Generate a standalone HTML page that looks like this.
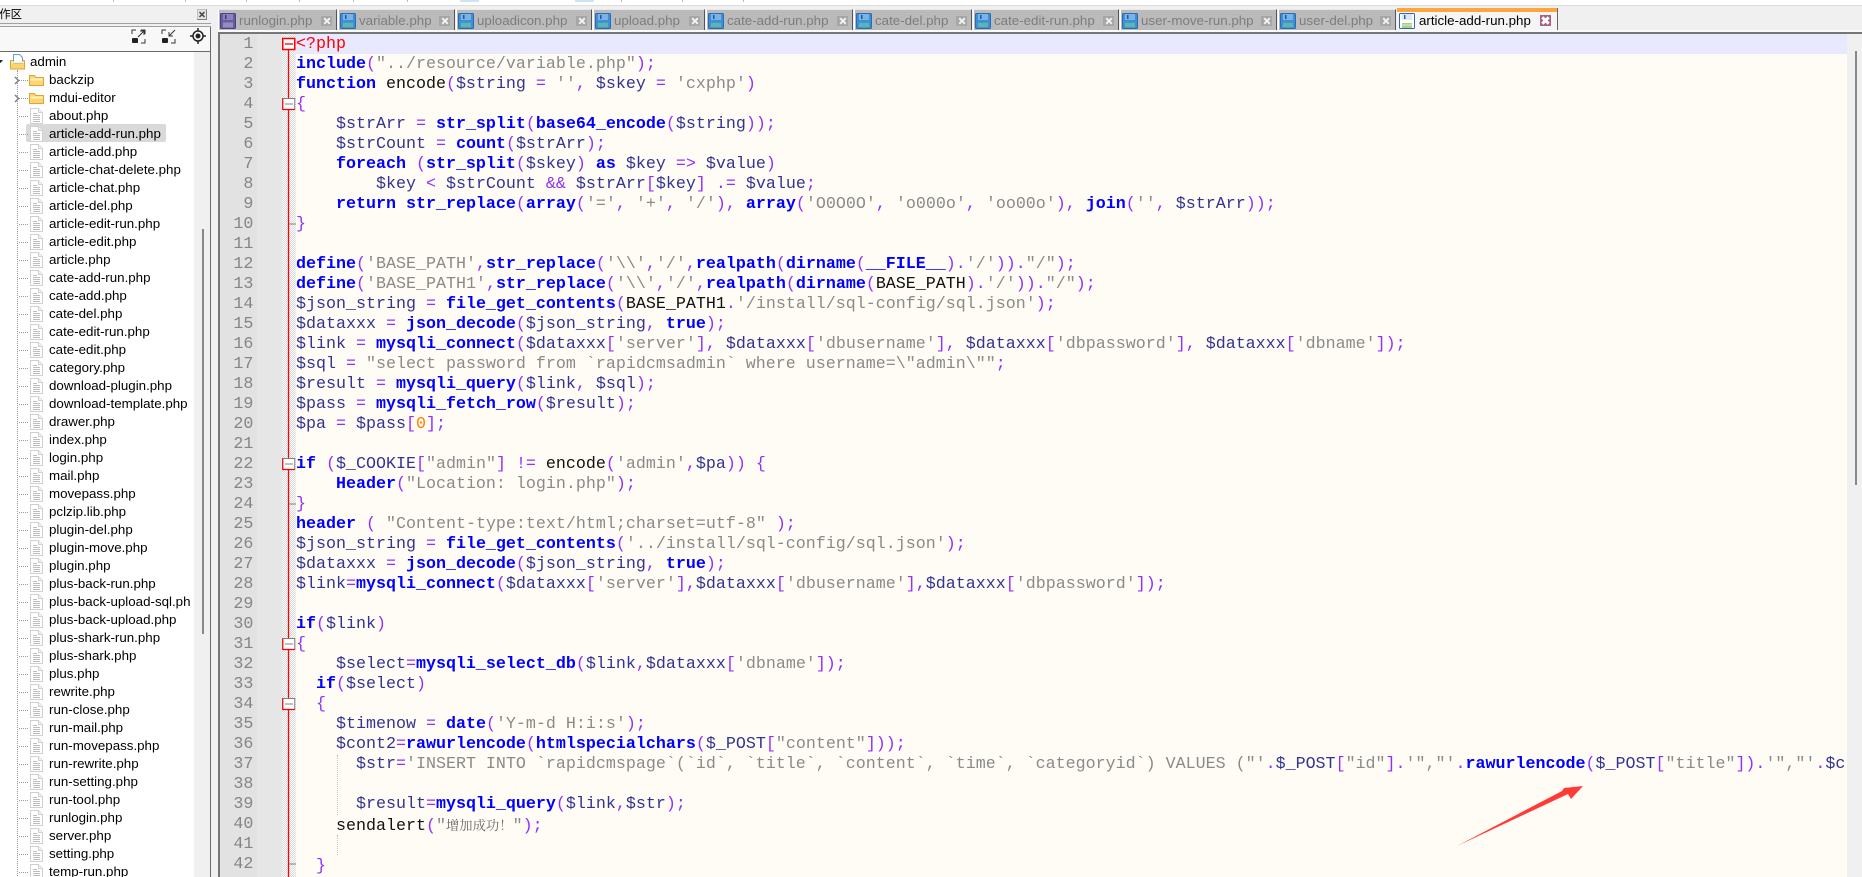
<!DOCTYPE html>
<html lang="zh">
<head>
<meta charset="utf-8">
<title>article-add-run.php</title>
<style>
html,body{margin:0;padding:0;width:1862px;height:877px;overflow:hidden;background:#f0f0f0;font-family:"Liberation Sans","Noto Sans CJK SC",sans-serif;}
*{box-sizing:border-box;}
.a{position:absolute;}
#top{left:0;top:0;width:1862px;height:5px;background:#fff;}
#topl{left:0;top:5px;width:1862px;height:1px;background:#dcdcdc;}
.tick{position:absolute;top:0;width:1px;height:2px;background:#bbb;}
.hl{position:absolute;top:0;height:2px;background:#cfe3f7;}
/* sidebar */
#ttl{right:1840px;top:8px;font-size:11.4px;line-height:15px;color:#000;white-space:nowrap;}
#l1{left:0;top:23px;width:211px;height:1px;background:#a0a0a0;}
#l2{left:0;top:26px;width:211px;height:1px;background:#a0a0a0;}
#bar{left:0;top:27px;width:210px;height:24px;background:#f8f8f8;}
#l3{left:0;top:51px;width:211px;height:1px;background:#6a6a6a;}
#vb{left:210px;top:27px;width:1px;height:850px;background:#6a6a6a;}
#tree{left:0;top:52px;width:194px;height:825px;background:#fff;overflow:hidden;}
#gut{left:194px;top:52px;width:16px;height:825px;background:#f0f0f0;}
#thumb{left:202px;top:229px;width:2px;height:405px;background:#888;}
#sel{left:26px;top:72px;width:140px;height:18px;background:#d9d9d9;border-radius:2px;}
#vdot{left:17px;top:18px;width:0;height:810px;border-left:1px dotted #999;}
#rows{left:0;top:1px;width:194px;}
.r{position:relative;height:18px;font-size:13.33px;line-height:18px;padding-left:49px;white-space:nowrap;color:#000;}
.r:before{content:"";position:absolute;left:19px;top:9px;width:9px;border-top:1px dotted #999;}
.r.root{padding-left:30px;}
.r.root:before{display:none;}
.r svg{position:absolute;left:29px;top:1px;}
.r.root svg{left:10px;}
.chev{position:absolute;left:14px;top:5px;}
/* tabs */
.t{position:absolute;top:9px;height:21px;background:#bababa;border-left:1px solid #fff;border-right:1px solid #555;border-top:1px solid #e8e8e8;font-size:13.33px;line-height:21px;color:#7d7d7d;white-space:nowrap;}
.t svg{position:absolute;left:1px;top:3px;}
.t span{position:absolute;left:20px;top:0;}
.t i{position:absolute;right:4px;top:6px;width:11px;height:10px;background:#a6a6a6;}
.t i:before,.t i:after{content:"";position:absolute;left:1.5px;top:4px;width:8px;height:2px;background:#f2f2f2;transform:rotate(45deg);}
.t i:after{transform:rotate(-45deg);}
#act{position:absolute;left:1397px;top:8px;width:161px;height:24px;background:#f5f5f5;border-right:1px solid #666;font-size:13.33px;line-height:26px;color:#000;white-space:nowrap;}
#act b{position:absolute;left:0;top:0;width:160px;height:4px;background:#ffa53c;}
#act svg{position:absolute;left:2px;top:5px;}
#act span{position:absolute;left:22px;top:0;}
#act i{position:absolute;left:143px;top:7px;width:11px;height:11px;background:#a8647e;}
#act i:before,#act i:after{content:"";position:absolute;left:1px;top:4px;width:9px;height:3px;background:#fff;transform:rotate(45deg);}
#act i:after{transform:rotate(-45deg);}
#wl{left:218px;top:30px;width:1644px;height:2px;background:#fafafa;}
#dl{left:218px;top:32px;width:1644px;height:2px;background:#777;}
/* editor */
#el{left:218px;top:32px;width:2px;height:845px;background:#777;}
#num1{left:220px;top:34px;width:37px;height:843px;background:#e2e2e2;}
#num2{left:257px;top:34px;width:25px;height:843px;background:#e6e6e6;}
#nums{left:220px;top:35px;width:33.4px;margin:0;text-align:right;font:16.67px/20px "Liberation Mono",monospace;color:#858585;height:842px;overflow:hidden;}
#fold{left:282px;top:34px;width:14px;height:843px;background-color:#fff;background-image:conic-gradient(#d8d8d8 25%,#fff 0 50%,#d8d8d8 0 75%,#fff 0);background-size:2px 2px;}
#bg{left:296px;top:34px;width:1551px;height:843px;background:#fffcf5;}
#cur{left:296px;top:34px;width:1551px;height:20px;background:#e8e8ff;}
#code{left:296px;top:35px;width:1551px;height:842px;margin:0;overflow:hidden;white-space:pre;font:16.67px/20px "Liberation Mono",monospace;color:#111;}
#code .k{color:#0000ff;font-weight:bold;}
#code .v{color:#333392;}
#code .o{color:#9030ff;}
#code .s{color:#8a8a8a;}
#code .n{color:#ff8000;}
#code .r0{color:#ff0000;}
#code .c{font:13.33px/20px "Noto Serif CJK SC","Noto Sans CJK SC",sans-serif;color:#6a6a6a;}
.g{position:absolute;left:337px;width:0;border-left:1px dotted #c4c4c4;}
#sg{left:1848px;top:34px;width:14px;height:843px;background:#f0f0f0;}
#st{left:1855px;top:51px;width:2px;height:434px;background:#888;}
</style>
</head>
<body>
<svg width="0" height="0" style="position:absolute">
<defs>
<symbol id="fb" viewBox="0 0 16 16"><rect x=".5" y=".5" width="15" height="15" rx="1" fill="#3c8fd8" stroke="#2a6cb0"/><rect x="3" y="1" width="10" height="6" fill="#7ab4e6"/><rect x="5" y="2" width="1.5" height="4" fill="#1f5a94"/><rect x="3" y="9" width="10" height="6" fill="#3f9fb0"/><path d="M3 11h10M3 13h10" stroke="#7fc6c6"/></symbol>
<symbol id="fp" viewBox="0 0 16 16"><rect x=".5" y=".5" width="15" height="15" rx="1" fill="#6a5aa0" stroke="#4a4090"/><rect x="3" y="1" width="10" height="6" fill="#8f82bc"/><rect x="5" y="2" width="1.5" height="4" fill="#3f3580"/><rect x="3" y="9" width="10" height="6" fill="#7f75b0"/><path d="M3 11h10M3 13h10" stroke="#a9a2cc"/></symbol>
<symbol id="fa" viewBox="0 0 16 16"><rect x=".5" y=".5" width="15" height="15" rx="1" fill="#fff" stroke="#2f66b5"/><rect x="3" y="1" width="10" height="6" fill="#dbe7f6"/><rect x="5" y="2" width="1.5" height="4" fill="#2f66b5"/><rect x="3" y="10" width="10" height="5" fill="#a8d08a"/><path d="M3 12h10" stroke="#d8ecc8"/></symbol>
<symbol id="file" viewBox="0 0 15 16"><path d="M1.5 .5h8l4 4v11h-12z" fill="#fff" stroke="#d0d0d0"/><path d="M9.5 .5v4h4" fill="#f2f2f2" stroke="#d0d0d0"/><path d="M4 5.500h4M4 7.500h7M4 9.500h7M4 11.500h7M4 13.500h7" stroke="#bdbdbd"/></symbol>
<symbol id="fold1" viewBox="0 0 15 16"><path d="M.5 3.500h5l1.500 2h7.500v8h-14z" fill="#fbd66e" stroke="#e3a335"/><path d="M1.500 6.500h12v2h-12z" fill="#fff2b8"/></symbol>
<symbol id="froot" viewBox="0 0 15 16"><path d="M.5 6.500h14v8.500h-14z" fill="#fbd66e" stroke="#e3a335"/><path d="M3.500 .5h6l3 3v6h-9z" fill="#fff" stroke="#6a9ad0"/><path d="M1.500 8.500h12" stroke="#fff2b8" stroke-width="2"/></symbol>
</defs>
</svg>

<div class="a" id="top">
<div class="tick" style="left:113px"></div><div class="tick" style="left:185px"></div><div class="tick" style="left:246px"></div><div class="tick" style="left:299px"></div><div class="tick" style="left:353px"></div><div class="tick" style="left:407px"></div><div class="hl" style="left:460px;width:19px"></div><div class="hl" style="left:575px;width:19px"></div><div class="tick" style="left:621px"></div><div class="tick" style="left:682px"></div><div class="tick" style="left:743px"></div>
</div>
<div class="a" id="topl"></div>

<!-- sidebar -->
<div class="a" id="ttl">文件夹工作区</div>
<div class="a" style="left:197px;top:9px;width:10px;height:11px;background:#e2e2e2;border:1px solid #c0c0c0;border-right-color:#808080;border-bottom-color:#808080"><svg width="8" height="9" style="position:absolute;left:0;top:0"><path d="M1.500 2l5 5M6.500 2l-5 5" stroke="#444" stroke-width="1.500"/></svg></div>
<div class="a" id="l1"></div>
<div class="a" id="l2"></div>
<div class="a" id="bar">
<svg class="a" style="left:131px;top:2px" width="15" height="15" viewBox="0 0 15 15" fill="none"><path d="M1 5V1h4M10 1h4v4M14 10v4h-4" stroke="#333"/><path d="M7 8l6-6M9 2h4v4" stroke="#333"/><rect x="1" y="9" width="6" height="5" rx="1" fill="#222"/></svg>
<svg class="a" style="left:161px;top:2px" width="15" height="15" viewBox="0 0 15 15" fill="none"><path d="M1 5V1h4M14 10v4h-4" stroke="#333"/><path d="M14 1L8 7M8 3v4h4" stroke="#333"/><rect x="1" y="9" width="6" height="5" rx="1" fill="#222"/></svg>
<svg class="a" style="left:190px;top:1px" width="16" height="16" viewBox="0 0 16 16" fill="none"><circle cx="8" cy="8" r="5" stroke="#222" stroke-width="1.500"/><circle cx="8" cy="8" r="2.500" fill="#222"/><path d="M8 0v3M8 13v3M0 8h3M13 8h3" stroke="#222" stroke-width="1.500"/></svg>
</div>
<div class="a" id="l3"></div>
<div class="a" id="vb"></div>
<div class="a" id="gut"></div>
<div class="a" id="thumb"></div>
<div class="a" id="tree">
<div class="a" id="sel"></div>
<div class="a" id="vdot"></div>
<svg class="a" style="left:0;top:7px" width="4" height="6"><path d="M-2 1h5l-2.500 3z" fill="#222"/></svg>
<div class="a" id="rows">
<div class="r root"><svg width="15" height="16"><use href="#froot"/></svg>admin</div>
<div class="r"><svg class="chev" style="left:14px;top:5px" width="6" height="9" viewBox="0 0 6 9"><path d="M1 1l3.500 3.500L1 8" fill="none" stroke="#808080" stroke-width="1.500"/></svg><svg width="15" height="16"><use href="#fold1"/></svg>backzip</div>
<div class="r"><svg class="chev" style="left:14px;top:5px" width="6" height="9" viewBox="0 0 6 9"><path d="M1 1l3.500 3.500L1 8" fill="none" stroke="#808080" stroke-width="1.500"/></svg><svg width="15" height="16"><use href="#fold1"/></svg>mdui-editor</div>
<div class="r"><svg width="15" height="16"><use href="#file"/></svg>about.php</div>
<div class="r"><svg width="15" height="16"><use href="#file"/></svg>article-add-run.php</div>
<div class="r"><svg width="15" height="16"><use href="#file"/></svg>article-add.php</div>
<div class="r"><svg width="15" height="16"><use href="#file"/></svg>article-chat-delete.php</div>
<div class="r"><svg width="15" height="16"><use href="#file"/></svg>article-chat.php</div>
<div class="r"><svg width="15" height="16"><use href="#file"/></svg>article-del.php</div>
<div class="r"><svg width="15" height="16"><use href="#file"/></svg>article-edit-run.php</div>
<div class="r"><svg width="15" height="16"><use href="#file"/></svg>article-edit.php</div>
<div class="r"><svg width="15" height="16"><use href="#file"/></svg>article.php</div>
<div class="r"><svg width="15" height="16"><use href="#file"/></svg>cate-add-run.php</div>
<div class="r"><svg width="15" height="16"><use href="#file"/></svg>cate-add.php</div>
<div class="r"><svg width="15" height="16"><use href="#file"/></svg>cate-del.php</div>
<div class="r"><svg width="15" height="16"><use href="#file"/></svg>cate-edit-run.php</div>
<div class="r"><svg width="15" height="16"><use href="#file"/></svg>cate-edit.php</div>
<div class="r"><svg width="15" height="16"><use href="#file"/></svg>category.php</div>
<div class="r"><svg width="15" height="16"><use href="#file"/></svg>download-plugin.php</div>
<div class="r"><svg width="15" height="16"><use href="#file"/></svg>download-template.php</div>
<div class="r"><svg width="15" height="16"><use href="#file"/></svg>drawer.php</div>
<div class="r"><svg width="15" height="16"><use href="#file"/></svg>index.php</div>
<div class="r"><svg width="15" height="16"><use href="#file"/></svg>login.php</div>
<div class="r"><svg width="15" height="16"><use href="#file"/></svg>mail.php</div>
<div class="r"><svg width="15" height="16"><use href="#file"/></svg>movepass.php</div>
<div class="r"><svg width="15" height="16"><use href="#file"/></svg>pclzip.lib.php</div>
<div class="r"><svg width="15" height="16"><use href="#file"/></svg>plugin-del.php</div>
<div class="r"><svg width="15" height="16"><use href="#file"/></svg>plugin-move.php</div>
<div class="r"><svg width="15" height="16"><use href="#file"/></svg>plugin.php</div>
<div class="r"><svg width="15" height="16"><use href="#file"/></svg>plus-back-run.php</div>
<div class="r"><svg width="15" height="16"><use href="#file"/></svg>plus-back-upload-sql.ph</div>
<div class="r"><svg width="15" height="16"><use href="#file"/></svg>plus-back-upload.php</div>
<div class="r"><svg width="15" height="16"><use href="#file"/></svg>plus-shark-run.php</div>
<div class="r"><svg width="15" height="16"><use href="#file"/></svg>plus-shark.php</div>
<div class="r"><svg width="15" height="16"><use href="#file"/></svg>plus.php</div>
<div class="r"><svg width="15" height="16"><use href="#file"/></svg>rewrite.php</div>
<div class="r"><svg width="15" height="16"><use href="#file"/></svg>run-close.php</div>
<div class="r"><svg width="15" height="16"><use href="#file"/></svg>run-mail.php</div>
<div class="r"><svg width="15" height="16"><use href="#file"/></svg>run-movepass.php</div>
<div class="r"><svg width="15" height="16"><use href="#file"/></svg>run-rewrite.php</div>
<div class="r"><svg width="15" height="16"><use href="#file"/></svg>run-setting.php</div>
<div class="r"><svg width="15" height="16"><use href="#file"/></svg>run-tool.php</div>
<div class="r"><svg width="15" height="16"><use href="#file"/></svg>runlogin.php</div>
<div class="r"><svg width="15" height="16"><use href="#file"/></svg>server.php</div>
<div class="r"><svg width="15" height="16"><use href="#file"/></svg>setting.php</div>
<div class="r"><svg width="15" height="16"><use href="#file"/></svg>temp-run.php</div>
</div>
</div>

<!-- tabs -->
<div class="t" style="left:218px;width:119px"><svg width="16" height="16"><use href="#fp"/></svg><span>runlogin.php</span><i></i></div>
<div class="t" style="left:338px;width:117px"><svg width="16" height="16"><use href="#fb"/></svg><span>variable.php</span><i></i></div>
<div class="t" style="left:456px;width:136px"><svg width="16" height="16"><use href="#fb"/></svg><span>uploadicon.php</span><i></i></div>
<div class="t" style="left:593px;width:112px"><svg width="16" height="16"><use href="#fb"/></svg><span>upload.php</span><i></i></div>
<div class="t" style="left:706px;width:147px"><svg width="16" height="16"><use href="#fb"/></svg><span>cate-add-run.php</span><i></i></div>
<div class="t" style="left:854px;width:118px"><svg width="16" height="16"><use href="#fb"/></svg><span>cate-del.php</span><i></i></div>
<div class="t" style="left:973px;width:146px"><svg width="16" height="16"><use href="#fb"/></svg><span>cate-edit-run.php</span><i></i></div>
<div class="t" style="left:1120px;width:157px"><svg width="16" height="16"><use href="#fb"/></svg><span>user-move-run.php</span><i></i></div>
<div class="t" style="left:1278px;width:118px"><svg width="16" height="16"><use href="#fb"/></svg><span>user-del.php</span><i></i></div>
<div id="act"><b></b><svg width="16" height="16"><use href="#fa"/></svg><span>article-add-run.php</span><i></i></div>
<div class="a" id="wl"></div>
<div class="a" id="dl"></div>

<!-- editor -->
<div class="a" id="el"></div>
<div class="a" id="num1"></div>
<div class="a" id="num2"></div>
<pre class="a" id="nums">1
2
3
4
5
6
7
8
9
10
11
12
13
14
15
16
17
18
19
20
21
22
23
24
25
26
27
28
29
30
31
32
33
34
35
36
37
38
39
40
41
42</pre>
<div class="a" id="fold"></div>
<svg class="a" style="left:282px;top:34px" width="14" height="843" viewBox="0 0 14 843">
<path d="M6.500 15V843" stroke="#ff0000" stroke-width="1.300" fill="none"/>
<rect x=".75" y="4.500" width="12" height="11" fill="#fff" stroke="#ff0000" stroke-width="1.500"/><path d="M3 10h8" stroke="#ff0000" stroke-width="1.300"/>
<g id="b">
<rect x=".75" y="64.500" width="12" height="11" fill="#fff" stroke="#808080"/><path d="M3 70h8" stroke="#808080"/><path d="M.75 64.500v11h12" fill="none" stroke="#ff0000" stroke-width="1.200"/>
<rect x=".75" y="424.500" width="12" height="11" fill="#fff" stroke="#808080"/><path d="M3 430h8" stroke="#808080"/><path d="M.75 424.500v11h12" fill="none" stroke="#ff0000" stroke-width="1.200"/>
<rect x=".75" y="604.500" width="12" height="11" fill="#fff" stroke="#808080"/><path d="M3 610h8" stroke="#808080"/><path d="M.75 604.500v11h12" fill="none" stroke="#ff0000" stroke-width="1.200"/>
<rect x=".75" y="664.500" width="12" height="11" fill="#fff" stroke="#808080"/><path d="M3 670h8" stroke="#808080"/><path d="M.75 664.500v11h12" fill="none" stroke="#ff0000" stroke-width="1.200"/>
</g>
<path d="M7 190h7M7 470h7M7 830h7" stroke="#808080"/>
</svg>
<div class="a" id="bg"></div>
<div class="a" id="cur"></div>
<div class="g" style="top:755px;height:60px"></div>
<div class="g" style="top:835px;height:20px"></div>
<pre class="a" id="code"><span class="r0">&lt;?php</span>
<span class="k">include</span><span class="o">(</span><span class="s">"../resource/variable.php"</span><span class="o">);</span>
<span class="k">function</span> encode<span class="o">(</span><span class="v">$string</span> <span class="o">=</span> <span class="s">''</span><span class="o">,</span> <span class="v">$skey</span> <span class="o">=</span> <span class="s">'cxphp'</span><span class="o">)</span>
<span class="o">{</span>
    <span class="v">$strArr</span> <span class="o">=</span> <span class="k">str_split</span><span class="o">(</span><span class="k">base64_encode</span><span class="o">(</span><span class="v">$string</span><span class="o">));</span>
    <span class="v">$strCount</span> <span class="o">=</span> <span class="k">count</span><span class="o">(</span><span class="v">$strArr</span><span class="o">);</span>
    <span class="k">foreach</span> <span class="o">(</span><span class="k">str_split</span><span class="o">(</span><span class="v">$skey</span><span class="o">)</span> <span class="k">as</span> <span class="v">$key</span> <span class="o">=&gt;</span> <span class="v">$value</span><span class="o">)</span>
        <span class="v">$key</span> <span class="o">&lt;</span> <span class="v">$strCount</span> <span class="o">&amp;&amp;</span> <span class="v">$strArr</span><span class="o">[</span><span class="v">$key</span><span class="o">]</span> <span class="o">.=</span> <span class="v">$value</span><span class="o">;</span>
    <span class="k">return</span> <span class="k">str_replace</span><span class="o">(</span><span class="k">array</span><span class="o">(</span><span class="s">'='</span><span class="o">,</span> <span class="s">'+'</span><span class="o">,</span> <span class="s">'/'</span><span class="o">),</span> <span class="k">array</span><span class="o">(</span><span class="s">'O0O0O'</span><span class="o">,</span> <span class="s">'o000o'</span><span class="o">,</span> <span class="s">'oo00o'</span><span class="o">),</span> <span class="k">join</span><span class="o">(</span><span class="s">''</span><span class="o">,</span> <span class="v">$strArr</span><span class="o">));</span>
<span class="o">}</span>

<span class="k">define</span><span class="o">(</span><span class="s">'BASE_PATH'</span><span class="o">,</span><span class="k">str_replace</span><span class="o">(</span><span class="s">'\\'</span><span class="o">,</span><span class="s">'/'</span><span class="o">,</span><span class="k">realpath</span><span class="o">(</span><span class="k">dirname</span><span class="o">(</span><span class="k">__FILE__</span><span class="o">).</span><span class="s">'/'</span><span class="o">)).</span><span class="s">"/"</span><span class="o">);</span>
<span class="k">define</span><span class="o">(</span><span class="s">'BASE_PATH1'</span><span class="o">,</span><span class="k">str_replace</span><span class="o">(</span><span class="s">'\\'</span><span class="o">,</span><span class="s">'/'</span><span class="o">,</span><span class="k">realpath</span><span class="o">(</span><span class="k">dirname</span><span class="o">(</span>BASE_PATH<span class="o">).</span><span class="s">'/'</span><span class="o">)).</span><span class="s">"/"</span><span class="o">);</span>
<span class="v">$json_string</span> <span class="o">=</span> <span class="k">file_get_contents</span><span class="o">(</span>BASE_PATH1<span class="o">.</span><span class="s">'/install/sql-config/sql.json'</span><span class="o">);</span>
<span class="v">$dataxxx</span> <span class="o">=</span> <span class="k">json_decode</span><span class="o">(</span><span class="v">$json_string</span><span class="o">,</span> <span class="k">true</span><span class="o">);</span>
<span class="v">$link</span> <span class="o">=</span> <span class="k">mysqli_connect</span><span class="o">(</span><span class="v">$dataxxx</span><span class="o">[</span><span class="s">'server'</span><span class="o">],</span> <span class="v">$dataxxx</span><span class="o">[</span><span class="s">'dbusername'</span><span class="o">],</span> <span class="v">$dataxxx</span><span class="o">[</span><span class="s">'dbpassword'</span><span class="o">],</span> <span class="v">$dataxxx</span><span class="o">[</span><span class="s">'dbname'</span><span class="o">]);</span>
<span class="v">$sql</span> <span class="o">=</span> <span class="s">"select password from `rapidcmsadmin` where username=\"admin\""</span><span class="o">;</span>
<span class="v">$result</span> <span class="o">=</span> <span class="k">mysqli_query</span><span class="o">(</span><span class="v">$link</span><span class="o">,</span> <span class="v">$sql</span><span class="o">);</span>
<span class="v">$pass</span> <span class="o">=</span> <span class="k">mysqli_fetch_row</span><span class="o">(</span><span class="v">$result</span><span class="o">);</span>
<span class="v">$pa</span> <span class="o">=</span> <span class="v">$pass</span><span class="o">[</span><span class="n">0</span><span class="o">];</span>

<span class="k">if</span> <span class="o">(</span><span class="v">$_COOKIE</span><span class="o">[</span><span class="s">"admin"</span><span class="o">]</span> <span class="o">!=</span> encode<span class="o">(</span><span class="s">'admin'</span><span class="o">,</span><span class="v">$pa</span><span class="o">))</span> <span class="o">{</span>
    <span class="k">Header</span><span class="o">(</span><span class="s">"Location: login.php"</span><span class="o">);</span>
<span class="o">}</span>
<span class="k">header</span> <span class="o">(</span> <span class="s">"Content-type:text/html;charset=utf-8"</span> <span class="o">);</span>
<span class="v">$json_string</span> <span class="o">=</span> <span class="k">file_get_contents</span><span class="o">(</span><span class="s">'../install/sql-config/sql.json'</span><span class="o">);</span>
<span class="v">$dataxxx</span> <span class="o">=</span> <span class="k">json_decode</span><span class="o">(</span><span class="v">$json_string</span><span class="o">,</span> <span class="k">true</span><span class="o">);</span>
<span class="v">$link</span><span class="o">=</span><span class="k">mysqli_connect</span><span class="o">(</span><span class="v">$dataxxx</span><span class="o">[</span><span class="s">'server'</span><span class="o">],</span><span class="v">$dataxxx</span><span class="o">[</span><span class="s">'dbusername'</span><span class="o">],</span><span class="v">$dataxxx</span><span class="o">[</span><span class="s">'dbpassword'</span><span class="o">]);</span>

<span class="k">if</span><span class="o">(</span><span class="v">$link</span><span class="o">)</span>
<span class="o">{</span>
    <span class="v">$select</span><span class="o">=</span><span class="k">mysqli_select_db</span><span class="o">(</span><span class="v">$link</span><span class="o">,</span><span class="v">$dataxxx</span><span class="o">[</span><span class="s">'dbname'</span><span class="o">]);</span>
  <span class="k">if</span><span class="o">(</span><span class="v">$select</span><span class="o">)</span>
  <span class="o">{</span>
    <span class="v">$timenow</span> <span class="o">=</span> <span class="k">date</span><span class="o">(</span><span class="s">'Y-m-d H:i:s'</span><span class="o">);</span>
    <span class="v">$cont2</span><span class="o">=</span><span class="k">rawurlencode</span><span class="o">(</span><span class="k">htmlspecialchars</span><span class="o">(</span><span class="v">$_POST</span><span class="o">[</span><span class="s">"content"</span><span class="o">]));</span>
      <span class="v">$str</span><span class="o">=</span><span class="s">'INSERT INTO `rapidcmspage`(`id`, `title`, `content`, `time`, `categoryid`) VALUES ("'</span><span class="o">.</span><span class="v">$_POST</span><span class="o">[</span><span class="s">"id"</span><span class="o">].</span><span class="s">'","'</span><span class="o">.</span><span class="k">rawurlencode</span><span class="o">(</span><span class="v">$_POST</span><span class="o">[</span><span class="s">"title"</span><span class="o">]).</span><span class="s">'","'</span><span class="o">.</span><span class="v">$c</span>

      <span class="v">$result</span><span class="o">=</span><span class="k">mysqli_query</span><span class="o">(</span><span class="v">$link</span><span class="o">,</span><span class="v">$str</span><span class="o">);</span>
    sendalert<span class="o">(</span><span class="s">"</span><span class="c">增加成功！</span><span class="s">"</span><span class="o">);</span>

  <span class="o">}</span></pre>
<div class="a" id="sg"></div>
<div class="a" id="st"></div>
<svg class="a" style="left:0;top:0;pointer-events:none" width="1862" height="877"><polygon points="1457,846 1562,791 1564,788 1583,786 1571,799 1568,794" fill="#ff3b36"/></svg>
</body>
</html>
